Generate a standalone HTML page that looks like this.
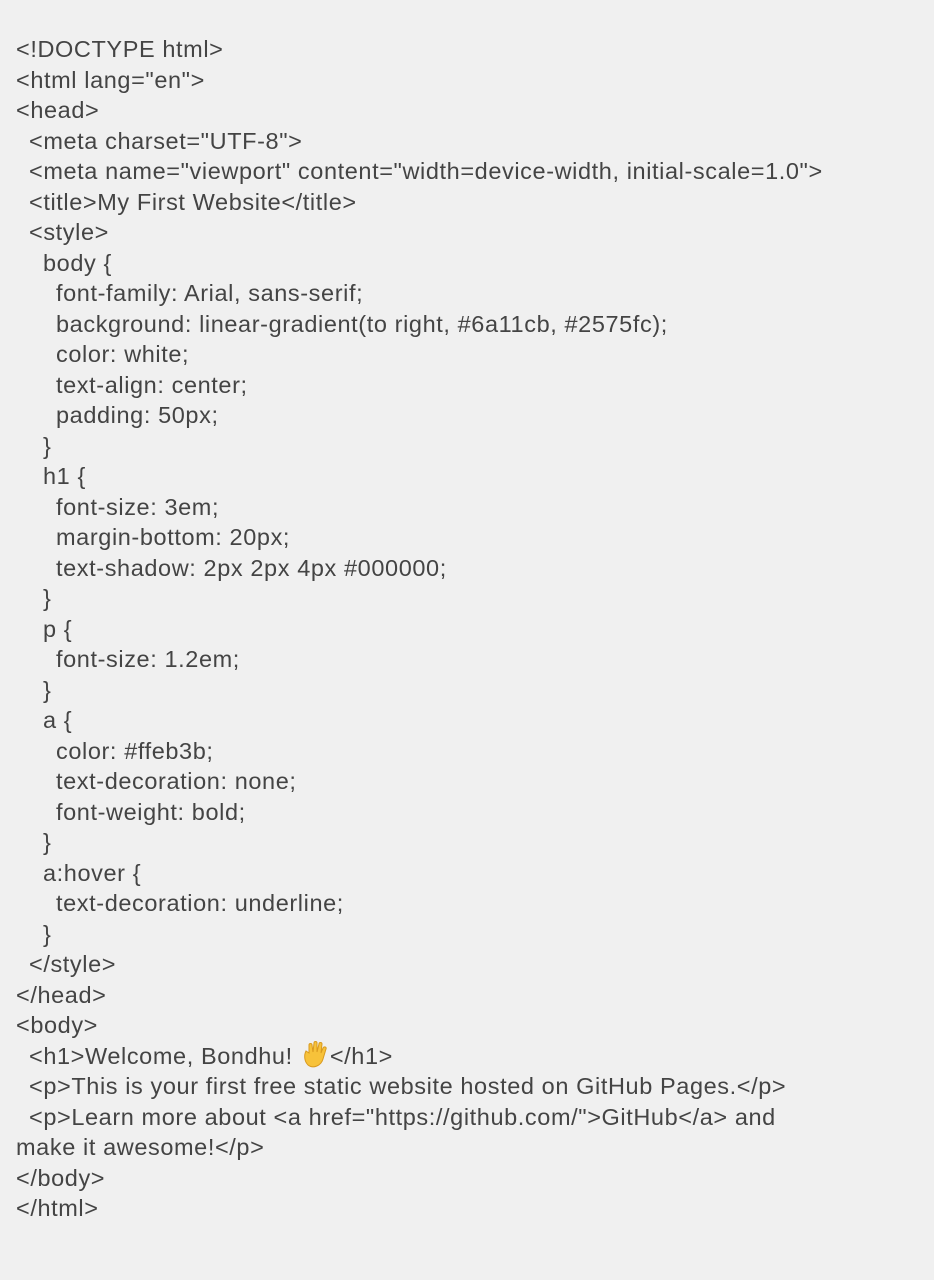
<!DOCTYPE html>
<html><head><meta charset="UTF-8"><style>
html,body{margin:0;background:#f0f0f0;}
body{width:934px;height:1280px;overflow:hidden;padding-top:34px;box-sizing:border-box;font-family:"Liberation Sans",Arial,sans-serif;font-size:23.5px;line-height:30.5px;color:#444;letter-spacing:0.6px;}
div{white-space:pre;padding-left:16px;}
.i1{padding-left:29px}.i2{padding-left:43px}.i3{padding-left:56px}
</style></head><body>
<div>&lt;!DOCTYPE html&gt;</div>
<div>&lt;html lang="en"&gt;</div>
<div>&lt;head&gt;</div>
<div class="i1">&lt;meta charset="UTF-8"&gt;</div>
<div class="i1">&lt;meta name="viewport" content="width=device-width, initial-scale=1.0"&gt;</div>
<div class="i1">&lt;title&gt;My First Website&lt;/title&gt;</div>
<div class="i1">&lt;style&gt;</div>
<div class="i2">body {</div>
<div class="i3">font-family: Arial, sans-serif;</div>
<div class="i3">background: linear-gradient(to right, #6a11cb, #2575fc);</div>
<div class="i3">color: white;</div>
<div class="i3">text-align: center;</div>
<div class="i3">padding: 50px;</div>
<div class="i2">}</div>
<div class="i2">h1 {</div>
<div class="i3">font-size: 3em;</div>
<div class="i3">margin-bottom: 20px;</div>
<div class="i3">text-shadow: 2px 2px 4px #000000;</div>
<div class="i2">}</div>
<div class="i2">p {</div>
<div class="i3">font-size: 1.2em;</div>
<div class="i2">}</div>
<div class="i2">a {</div>
<div class="i3">color: #ffeb3b;</div>
<div class="i3">text-decoration: none;</div>
<div class="i3">font-weight: bold;</div>
<div class="i2">}</div>
<div class="i2">a:hover {</div>
<div class="i3">text-decoration: underline;</div>
<div class="i2">}</div>
<div class="i1">&lt;/style&gt;</div>
<div>&lt;/head&gt;</div>
<div>&lt;body&gt;</div>
<div class="i1">&lt;h1&gt;Welcome, Bondhu! <svg width="30" height="28" viewBox="0 0 30 28" style="vertical-align:-5px"><path d="M8 24 C4 20 4 14 6 10 L9 12 L9 4 C9 2 12 2 12 4 L13 11 L14 2 C14 0 17 0 17 2 L17 11 L19 3 C19 1 22 1 22 3 L21 12 L23 7 C24 5 27 6 26 8 L23 18 C21 25 13 28 8 24 Z" fill="#f7c23a" stroke="#d99a1e" stroke-width="1"/></svg>&lt;/h1&gt;</div>
<div class="i1">&lt;p&gt;This is your first free static website hosted on GitHub Pages.&lt;/p&gt;</div>
<div class="i1">&lt;p&gt;Learn more about &lt;a href="https://github.com/"&gt;GitHub&lt;/a&gt; and</div>
<div>make it awesome!&lt;/p&gt;</div>
<div>&lt;/body&gt;</div>
<div>&lt;/html&gt;</div>
</body></html>
